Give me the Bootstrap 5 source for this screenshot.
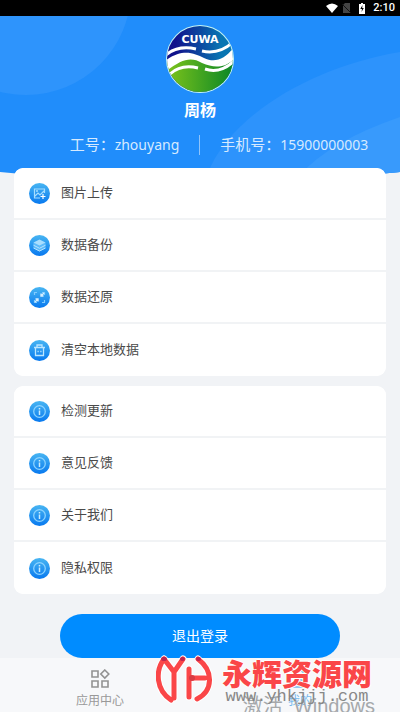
<!DOCTYPE html>
<html lang="zh-CN">
<head>
<meta charset="utf-8">
<meta name="viewport" content="width=device-width, initial-scale=1">
<title>我的</title>
<link href="https://cdn.jsdelivr.net/npm/bootstrap@5.3.0/dist/css/bootstrap.min.css" rel="stylesheet">
<style>
  body { font-family: "Liberation Sans", "Noto Sans CJK SC", sans-serif; background: #f1f3f6; }
  .screen { overflow: hidden; }
  .status { height: 16px; background: #000; color: #fff; padding-right: 5px; font: 500 11px/16px Roboto, sans-serif; }
  .hero { height: 159px; color: #fff; padding-top: 8px; }
  .hero-bg { z-index: 0; }
  .logo { width: 70px; height: 70px; }
  .hero-name { font-size: 16px; line-height: 24px; margin-top: 5px; }
  .info { font-size: 15px; line-height: 20px; margin-top: 12px; padding-left: 38px; color: #d6eaff; }
  .info-value { font: 14px/20px "Noto Sans", sans-serif; }
  .info-item + .info-item { border-left: 1px solid #8fc4fb; padding-left: 20px; margin-left: 20px; }
  .content { padding: 0 14px; margin-top: -7px; }
  .menu { border-radius: 9px; overflow: hidden; background: #fff; }
  .menu + .menu { margin-top: 10px; }
  .menu .menu-row { height: 52px; padding: 0 15px; font-size: 13px; color: #4a4a4a; border: 0; border-bottom: 2px solid #f1f3f5; }
  .menu .menu-row:last-child { border-bottom: 0; }
  .menu-row svg { width: 21px; height: 21px; margin-right: 11px; }
  .logout { height: 44px; margin: 20px 46px 0; background: #008cff; color: #fff; font-size: 14px; line-height: 20px; }
  .logout:hover { background: #007fe8; color: #fff; }
  .tabs { height: 54px; background: #f7f8fa; }
  .tab { color: #999; font-size: 12px; line-height: 18px; padding-top: 11px; }
  .tab.active { color: #75b9ed; }
  .tab svg { width: 20px; height: 20px; margin-bottom: 3px; }
  .stamp { right: 28px; bottom: 6px; pointer-events: none; }
  .stamp svg { width: 58px; height: 52px; }
  .stamp-title { font: 900 30px/34px "Noto Sans CJK SC", sans-serif; color: #fa4648; text-shadow: 1px 0 #fff, -1px 0 #fff, 0 1px #fff, 0 -1px #fff; }
  .stamp-url { font: 17px/16px "Liberation Mono", monospace; color: #888; }
  .activation { right: 25px; bottom: -6px; font-size: 20px; line-height: 24px; color: #a5a8ab; pointer-events: none; }
</style>
</head>
<body>
<div class="screen position-relative min-vh-100 d-flex flex-column">
  <svg class="position-absolute" width="0" height="0" aria-hidden="true">
    <defs>
      <linearGradient id="disc" x1="0" y1="0" x2="0" y2="1"><stop stop-color="#48b5f2"/><stop offset="1" stop-color="#0879ef"/></linearGradient>
    </defs>
  </svg>
  <div class="status d-flex justify-content-end align-items-center">
    <svg width="12" height="10" viewBox="0 0 12 10" aria-hidden="true"><path fill="#fff" d="M0 3Q6-2 12 3L6 10Z"/></svg>
    <svg class="ms-1" width="9" height="10" viewBox="0 0 9 10" aria-hidden="true"><path fill="#444" d="M3 0H8V10H1V2Z"/><path d="M0 1 9 10" stroke="#111"/></svg>
    <svg class="mx-2" width="6" height="11" viewBox="0 0 6 11" aria-hidden="true"><path fill="#fff" d="M2 0H4V1H6V11H0V1H2Z"/><path fill="#000" d="M3.5 2 1.3 6H3L2.5 9 4.8 5H3.2Z"/></svg>
    <span>2:10</span>
  </div>

  <header class="hero position-relative">
    <svg class="hero-bg position-absolute top-0 start-0 w-100 h-100" viewBox="0 0 400 159" preserveAspectRatio="none" aria-hidden="true">
      <defs><clipPath id="edge"><path d="M0 0H400V156Q200 176 0 156Z"/></clipPath></defs>
      <g clip-path="url(#edge)">
        <path fill="#208dfb" d="M0 0H400V159H0Z"/>
        <circle cx="26" cy="-26" r="105" fill="#2e94fc"/>
        <path fill="#2d93fc" d="M400 36C315 50 230 98 207 159H400Z"/>
        <path fill="#389afc" d="M400 101Q330 125 300 159H400Z"/>
      </g>
    </svg>
    <div class="position-relative d-flex flex-column align-items-center">
      <svg class="logo" viewBox="0 0 70 70" role="img" aria-label="CUWA">
        <defs>
          <linearGradient id="sky"><stop offset=".15" stop-color="#11128b"/><stop offset=".8" stop-color="#0875b2"/></linearGradient>
          <linearGradient id="land"><stop stop-color="#80c51b"/><stop offset="1" stop-color="#078526"/></linearGradient>
          <clipPath id="round"><circle cx="35" cy="35" r="33"/></clipPath>
        </defs>
        <circle cx="35" cy="35" r="34" fill="#c5f4f4"/>
        <g clip-path="url(#round)">
          <path fill="url(#sky)" d="M0 0H70V70H0Z"/>
          <path fill="url(#land)" d="M0 40C20 25 29 32 39 38C51 44 62 42 70 31V70H0Z"/>
          <path fill="#fff" d="M0 37C17 24 29 29 39 34C51 40 61 34 70 22V34C59 45 49 44 37 39C25 32 16 36 0 48Z"/>
          <path fill="none" stroke="#fff" stroke-width="3" d="M1 31Q13 21 31 25M37 27Q55 31 69 17M5 50Q16 40 33 44M40 45Q55 50 69 37"/>
          <text x="35" y="19" text-anchor="middle" fill="#fff" font-family="DejaVu Sans" font-weight="bold" font-size="11">CUWA</text>
        </g>
      </svg>
      <div class="hero-name fw-bold">周杨</div>
      <div class="info d-flex text-nowrap">
        <div class="info-item">工号：<span class="info-value">zhouyang</span></div>
        <div class="info-item">手机号：<span class="info-value">15900000003</span></div>
      </div>
    </div>
  </header>

  <main class="content position-relative d-flex flex-column flex-grow-1">
    <div class="menu list-group list-group-flush">
      <a href="#" class="menu-row list-group-item list-group-item-action d-flex align-items-center">
        <svg viewBox="0 0 21 21" aria-hidden="true"><circle cx="10.5" cy="10.5" r="10.5" fill="url(#disc)"/><g fill="none" stroke="#a5ddff" stroke-width="1.2"><path d="M11 15H5.5V6H15.5V10M6 13 9 10 11 12 15 8"/><path stroke="#fff" d="M14 11V16M11.5 13.5H16.5"/></g><circle cx="8" cy="8" r="1" fill="#a5ddff"/></svg>图片上传</a>
      <a href="#" class="menu-row list-group-item list-group-item-action d-flex align-items-center">
        <svg viewBox="0 0 21 21" aria-hidden="true"><circle cx="10.5" cy="10.5" r="10.5" fill="url(#disc)"/><path fill="#5dbafa" d="M4.5 7.5V13L10.5 16.5 16.5 13V7.5Z"/><path fill="#a9defe" d="M10.5 4.5 16.5 7.5 10.5 10.5 4.5 7.5Z"/><path fill="none" stroke="#b5e3ff" d="M4.5 10.2 10.5 13.3 16.5 10.2M4.5 13 10.5 16 16.5 13"/></svg>数据备份</a>
      <a href="#" class="menu-row list-group-item list-group-item-action d-flex align-items-center">
        <svg viewBox="0 0 21 21" aria-hidden="true"><circle cx="10.5" cy="10.5" r="10.5" fill="url(#disc)"/><path fill="none" stroke="#7fcbff" stroke-width="1.2" d="M5.5 8V5.5H8M13 5.5H15.5V8M15.5 13V15.5H13M8 15.5H5.5V13"/><path fill="none" stroke="#d5efff" stroke-width="1.4" d="M15 6 12 9M12 6.5V9H14.5M6 15 9 12M6.5 12H9V14.5"/></svg>数据还原</a>
      <a href="#" class="menu-row list-group-item list-group-item-action d-flex align-items-center">
        <svg viewBox="0 0 21 21" aria-hidden="true"><circle cx="10.5" cy="10.5" r="10.5" fill="url(#disc)"/><path fill="none" stroke="#bce6ff" stroke-width="1.3" d="M5 7.5H16M8 7V5H13V7M6.5 8V15.5H14.5V8M8.5 11.5H9.7M11.3 11.5H12.5"/></svg>清空本地数据</a>
    </div>

    <div class="menu list-group list-group-flush">
      <a href="#" class="menu-row list-group-item list-group-item-action d-flex align-items-center">
        <svg viewBox="0 0 21 21" aria-hidden="true"><g id="info-icon"><circle cx="10.5" cy="10.5" r="10.5" fill="url(#disc)"/><circle cx="10.5" cy="10.5" r="5.8" fill="none" stroke="#8bd3ff" stroke-width="1.3"/><path stroke="#c9ecff" stroke-width="1.5" d="M10.5 7V8.5M10.5 9.5V14"/></g></svg>检测更新</a>
      <a href="#" class="menu-row list-group-item list-group-item-action d-flex align-items-center">
        <svg viewBox="0 0 21 21" aria-hidden="true"><use href="#info-icon"/></svg>意见反馈</a>
      <a href="#" class="menu-row list-group-item list-group-item-action d-flex align-items-center">
        <svg viewBox="0 0 21 21" aria-hidden="true"><use href="#info-icon"/></svg>关于我们</a>
      <a href="#" class="menu-row list-group-item list-group-item-action d-flex align-items-center">
        <svg viewBox="0 0 21 21" aria-hidden="true"><use href="#info-icon"/></svg>隐私权限</a>
    </div>
    <button type="button" class="logout btn rounded-pill border-0 p-0">退出登录</button>
  </main>

  <nav class="tabs d-flex">
    <a href="#" class="tab flex-fill w-50 d-flex flex-column align-items-center text-decoration-none">
      <svg viewBox="0 0 20 20" fill="none" stroke="#929292" stroke-width="1.6" aria-hidden="true"><path d="M2 2H8V8H2ZM2 12H8V18H2ZM12 12H18V18H12ZM14.8 1 18.8 5 14.8 9 10.8 5Z"/></svg>应用中心</a>
    <a href="#" class="tab active flex-fill w-50 d-flex flex-column align-items-center text-decoration-none">
      <svg viewBox="0 0 20 20" fill="none" stroke="#75b9ed" stroke-width="1.6" aria-hidden="true"><circle cx="10" cy="6" r="4"/><path d="M2 18Q3 11 10 11T18 18Z"/></svg>我的</a>
  </nav>

  <div class="activation position-absolute text-nowrap">激活&nbsp; Windows</div>
  <div class="stamp position-absolute d-flex align-items-center">
    <svg viewBox="0 0 58 52" fill="none" stroke-linecap="round" aria-hidden="true">
      <g stroke="#fff" stroke-width="7"><path d="M8 5C-1 17 0 36 15 46M8 5 18 18M27 5 18 18V44M33 15V43M33 24H49M42 5C58 17 57 37 41 45"/></g>
      <path stroke="#fa4648" stroke-width="5" d="M8 5C-1 17 0 36 15 46M8 5 18 18M27 5 18 18V44M33 15V43M33 24H49M42 5C58 17 57 37 41 45"/>
      <path stroke="#bd244e" stroke-width="4" d="M7 5H9M26 5H27M42 5H43"/>
      <circle cx="36" cy="24" r="3" fill="#d83a42"/>
    </svg>
    <div class="ms-2 d-flex flex-column align-items-center">
      <div class="stamp-title">永辉资源网</div>
      <div class="stamp-url">www.yhkjjj.com</div>
    </div>
  </div>
</div>
<script src="https://cdn.jsdelivr.net/npm/bootstrap@5.3.0/dist/js/bootstrap.bundle.min.js"></script>
</body>
</html>
